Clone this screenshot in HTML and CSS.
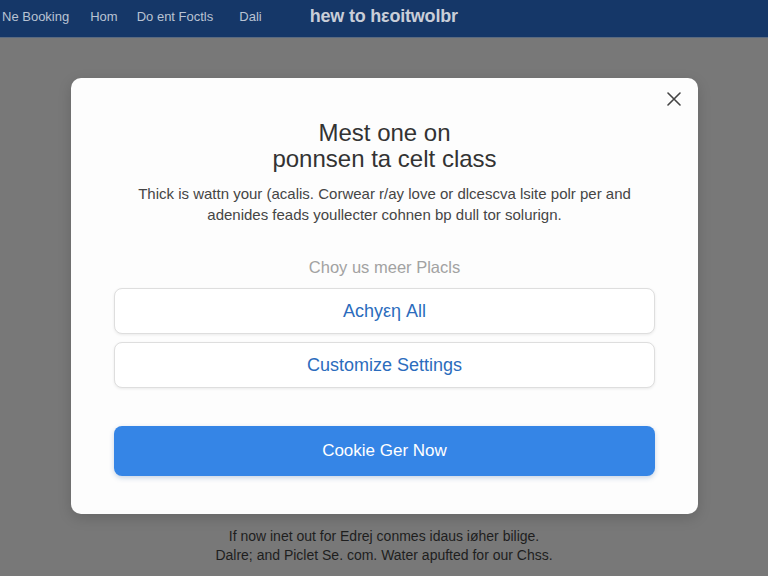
FILE: index.html
```html
<!DOCTYPE html>
<html lang="en">
<head>
  <meta charset="UTF-8" />
  <meta name="viewport" content="width=device-width, initial-scale=1" />
  <title>Cookie Preferences</title>
  <link rel="stylesheet" href="styles.css">
</head>
<body>
  <header class="topbar">
    <nav class="nav">
      <a href="#">Ne Booking</a>
      <a href="#">Hom</a>
      <a href="#">Do ent Foctls</a>
      <a href="#">Dali</a>
    </nav>
    <div class="brand">hew to hεoitwolbr</div>
  </header>

  <main class="backdrop">
    <div class="modal">
      <button class="close-btn" aria-label="Close">
        <svg width="14" height="14" viewBox="0 0 14 14">
          <path d="M1 1 L13 13 M13 1 L1 13" stroke="#444" stroke-width="1.6" fill="none" stroke-linecap="round"/>
        </svg>
      </button>

      <h1 class="modal-title">Mest one on<br>ponnsen ta celt class</h1>
      <p class="modal-text">
        Thick is wattn your (acalis. Corwear r/ay love or dlcescva lsite polr per and<br>
        adenides feads youllecter cohnen bp dull tor solurign.
      </p>

      <p class="choose">Choy us meer Placls</p>

      <div class="actions">
        <button class="btn btn-outline">Achyεη All</button>
        <button class="btn btn-outline">Customize Settings</button>
        <button class="btn btn-primary">Cookie Ger Now</button>
      </div>
    </div>

    <p class="page-note">
      If now inet out for Edrej conmes idaus iøher bilige.<br>
      Dalre; and Piclet Se. com. Water apufted for our Chss.
    </p>
  </main>
</body>
</html>
```

FILE: styles.css
```css
* {
  box-sizing: border-box;
}
body {
  margin: 0;
  font-family: 'Liberation Sans', Arial, sans-serif;
  background-color: #787878;
  height: 576px;
  overflow: hidden;
}
.topbar {
  height: 38px;
  padding-bottom: 4px;
  background-color: #153768;
  display: flex;
  align-items: center;
  border-bottom: 1px solid #5a6a80;
}
.nav {
  display: flex;
  padding-left: 2px;
}
.nav a {
  color: #b9c3d3;
  text-decoration: none;
  font-size: 13px;
  margin-right: 21px;
}
.nav a:nth-child(2) {
  margin-right: 19px;
}
.nav a:nth-child(3) {
  margin-right: 26px;
}
.brand {
  margin-left: 27px;
  color: #c9ced8;
  font-size: 18px;
  font-weight: bold;
  letter-spacing: -0.2px;
}
.backdrop {
  display: flex;
  flex-direction: column;
  align-items: center;
  padding-top: 40px;
}
.modal {
  position: relative;
  width: 627px;
  margin-left: 1px;
  background: #fdfdfd;
  border-radius: 10px;
  padding: 42px 43px 38px;
  box-shadow: 0 4px 14px rgba(0,0,0,0.15);
  text-align: center;
}
.close-btn {
  position: absolute;
  top: 14px;
  right: 17px;
  border: none;
  background: none;
  padding: 0;
  width: 14px;
  height: 14px;
  cursor: pointer;
}
.modal-title {
  margin: 0;
  font-size: 24px;
  font-weight: normal;
  line-height: 26px;
  color: #333;
}
.modal-text {
  margin: 11px 0 0;
  font-size: 15px;
  line-height: 21px;
  color: #454545;
}
.choose {
  margin: 32px 0 0;
  font-size: 16.5px;
  line-height: 20px;
  color: #a2a2a2;
}
.actions {
  display: flex;
  flex-direction: column;
  margin-top: 11px;
}
.btn {
  font-family: inherit;
  border-radius: 8px;
  cursor: pointer;
}
.btn-outline {
  height: 46px;
  font-size: 18px;
  background: #fff;
  border: 1px solid #dedede;
  color: #2b6cbd;
  box-shadow: 0 1px 3px rgba(0,0,0,0.08);
  margin-bottom: 8px;
}
.btn-primary {
  height: 50px;
  margin-top: 30px;
  font-size: 17px;
  background-color: #3585e6;
  border: none;
  color: #fff;
  box-shadow: 0 2px 5px rgba(40,90,160,0.25);
}
.page-note {
  margin: 13px 0 0;
  font-size: 14px;
  line-height: 19px;
  color: #1e1e1e;
  text-align: center;
}
```
